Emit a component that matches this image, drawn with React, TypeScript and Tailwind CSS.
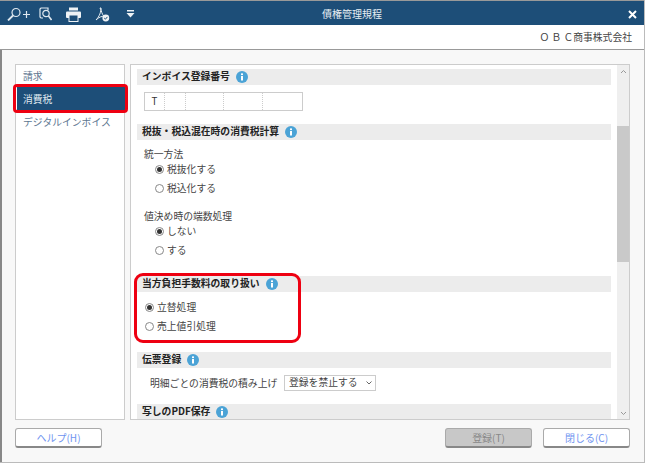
const jp = { fontFamily: '"Noto Sans CJK JP", "Liberation Sans", sans-serif' };

function Info({ className = "" }: { className?: string }) {
  return (
    <svg width="12" height="12" viewBox="0 0 12 12" className={className}>
      <circle cx="6" cy="6" r="6" fill="#4ba3d6" />
      <rect x="5" y="5" width="2" height="4.5" fill="#fff" />
      <rect x="5" y="2.4" width="2" height="1.7" fill="#fff" />
    </svg>
  );
}

function Bar({ title }: { title: string }) {
  return (
    <div className="h-4 shrink-0 bg-[#ececec] flex items-center pl-[5px] w-[474px]">
      <span className="text-[9.8px] font-bold text-[#222] leading-none">{title}</span>
      <Info className="ml-[6px]" />
    </div>
  );
}

function Radio({ label, on }: { label: string; on?: boolean }) {
  return (
    <div className="flex items-center h-[19px] gap-[3px]">
      <span className="w-[9px] h-[9px] rounded-full border border-[#888] bg-white flex items-center justify-center">
        {on && <span className="w-[5px] h-[5px] rounded-full bg-[#333]" />}
      </span>
      <span className="text-[9.8px] text-[#444] leading-none">{label}</span>
    </div>
  );
}

function Btn({ label, disabled, className = "" }: { label: string; disabled?: boolean; className?: string }) {
  return (
    <div
      className={`w-[87px] h-5 rounded-[3px] border border-[#aaa] border-b-2 border-b-[#888] flex items-center justify-center text-[10px] ${
        disabled ? "bg-[#c8c8c8] text-[#888]" : "bg-white text-[#6f94f0]"
      } ${className}`}
    >
      {label}
    </div>
  );
}

export default function App() {
  return (
    <div style={jp} className="relative w-[645px] h-[463px] flex flex-col bg-[#f8f8f8] overflow-hidden">
      {/* title bar */}
      <div className="h-[25px] shrink-0 bg-[#1d4e78] border-t border-t-[#999] flex items-center pt-[2px] pl-[7px] pr-[8px] text-white relative">
        <svg width="24" height="14" viewBox="0 0 24 14" fill="none" stroke="#dfe8ef" strokeWidth="1.2">
          <circle cx="9" cy="5.5" r="4" />
          <path d="M6 8.5 L1 13.5" strokeWidth="1.8" />
          <path d="M16 7.5 H23 M19.5 4 V11" />
        </svg>
        <svg width="13" height="14" viewBox="0 0 13 14" fill="none" stroke="#dfe8ef" strokeWidth="1.2" className="ml-[8px]">
          <path d="M5 1 H2 L1 2 V10 L2 11 H4" />
          <circle cx="7" cy="6.5" r="3.2" />
          <path d="M9.5 9 L12.5 13" strokeWidth="1.6" />
          <path d="M5 1 H9 V3" />
        </svg>
        <svg width="15" height="15" viewBox="0 0 15 15" className="ml-[14px]">
          <rect x="3" y="0.5" width="9" height="3" fill="#eef2f5" />
          <rect x="0" y="4.5" width="15" height="6.5" rx="1" fill="#eef2f5" />
          <rect x="3" y="8" width="9" height="6.5" fill="#1d4e78" stroke="#eef2f5" />
        </svg>
        <svg width="15" height="15" viewBox="0 0 15 15" fill="none" className="ml-[14px]">
          <path d="M5 1 C7 4 4 10 1 13 C4 10 7 9 9 9.5 C7 7 6 4 6 1 Z" stroke="#e6edf2" strokeWidth="1" />
          <circle cx="10.8" cy="11" r="3.4" fill="#eef2f5" />
          <path d="M9.2 11 L10.4 12.2 L12.4 9.9" stroke="#1d4e78" strokeWidth="1" />
        </svg>
        <svg width="9" height="8" viewBox="0 0 9 8" className="ml-[16px]">
          <rect x="1" y="0" width="7" height="1.5" fill="#eef2f5" />
          <path d="M0.5 3 H8.5 L4.5 7.5 Z" fill="#eef2f5" />
        </svg>
        <span className="flex-1 text-center text-[10px] text-[#e8eef3] pr-[59px] leading-none">債権管理規程</span>
        <svg width="9" height="9" viewBox="0 0 9 9" stroke="#fff" strokeWidth="2">
          <path d="M1 1 L8 8 M8 1 L1 8" />
        </svg>
      </div>

      {/* company */}
      <div className="h-[25px] shrink-0 bg-white border-b border-b-[#999] flex items-center justify-end pt-[1px] pr-[13px] text-[9.8px] text-[#444] leading-none">
        <span>Ｏ Ｂ Ｃ商事株式会社</span>
      </div>

      {/* body */}
      <div className="flex-1 flex flex-col border-l-2 border-l-[#888] border-b border-b-[#bbb] pl-[13px] pr-[15px] pt-[14px] min-h-0">
        <div className="flex gap-[5px] h-[356px] shrink-0">
          <div className="w-[110px] border border-[#ccc] bg-white px-px flex flex-col text-[9.8px]">
            <div className="h-[22px] flex items-center pl-[6px] text-[#5d7690]">請求</div>
            <div className="h-[24px] -mr-[2px] flex items-center pl-[6px] bg-[#1d4e78] text-[#dfe8ef]">消費税</div>
            <div className="h-[22px] flex items-center pl-[6px] text-[#5d7690]">デジタルインボイス</div>
          </div>

          <div className="w-[500px] border border-[#ccc] bg-white flex relative overflow-hidden">
            <div className="flex-1 pl-[6px] pt-[4px] flex flex-col min-w-0">
              <Bar title="インボイス登録番号" />
              <div className="flex shrink-0 ml-[7px] mt-[7px] h-[19px] w-[159px] border border-[#ccc] text-[9.8px] text-[#333]">
                <div className="w-[20px] flex items-center justify-center border-r border-dotted border-r-[#ccc]">T</div>
                <div className="w-[21px] border-r border-dotted border-r-[#ccc]" />
                <div className="w-[38px] border-r border-dotted border-r-[#ccc]" />
                <div className="w-[39px] border-r border-dotted border-r-[#ccc]" />
                <div className="flex-1" />
              </div>
              <div className="mt-[13px]"><Bar title="税抜・税込混在時の消費税計算" /></div>
              <div className="pl-[7px] pt-[7px] text-[9.8px] text-[#444]">
                <div className="h-[15px] flex items-center">統一方法</div>
                <div className="pl-[11px] -mt-[2px]">
                  <Radio label="税抜化する" on />
                  <Radio label="税込化する" />
                </div>
                <div className="h-[15px] flex items-center mt-[11px]">値決め時の端数処理</div>
                <div className="pl-[11px] -mt-[2px]">
                  <Radio label="しない" on />
                  <Radio label="する" />
                </div>
              </div>
              <div className="mt-[16px]"><Bar title="当方負担手数料の取り扱い" /></div>
              <div className="pl-[8px] pt-[6px]">
                <Radio label="立替処理" on />
                <Radio label="売上値引処理" />
              </div>
              <div className="mt-[16px]"><Bar title="伝票登録" /></div>
              <div className="flex shrink-0 items-center mt-[7px] pl-[13px] text-[9.8px] text-[#444]">
                <span className="w-[134px]">明細ごとの消費税の積み上げ</span>
                <div className="w-[92px] h-[16px] border border-[#ccc] bg-white flex items-center pl-[4px] pr-[3px] justify-between">
                  <span className="leading-none">登録を禁止する</span>
                  <svg width="6" height="4" viewBox="0 0 6 4" fill="none" stroke="#666"><path d="M0.5 0.5 L3 3 L5.5 0.5" /></svg>
                </div>
              </div>
              <div className="mt-[13px]"><Bar title="写しのPDF保存" /></div>
            </div>

            {/* scrollbar */}
            <div className="w-[12px] shrink-0 bg-[#efefef] flex flex-col items-center relative">
              <svg width="7" height="5" viewBox="0 0 7 5" fill="none" stroke="#999" className="mt-[4px] shrink-0"><path d="M1 4 L3.5 1.5 L6 4" /></svg>
              <div className="w-full h-[136px] bg-[#c9c9c9] mt-[52px] shrink-0" />
              <div className="flex-1" />
              <svg width="7" height="5" viewBox="0 0 7 5" fill="none" stroke="#999" className="mb-[3px] shrink-0"><path d="M1 1 L3.5 3.5 L6 1" /></svg>
            </div>
          </div>
        </div>

        {/* footer */}
        <div className="flex mt-[8px] items-start">
          <Btn label="ヘルプ(H)" />
          <div className="flex-1" />
          <Btn label="登録(T)" disabled className="mr-[11px]" />
          <Btn label="閉じる(C)" />
        </div>
      </div>

      {/* red highlights */}
      <div className="absolute left-[13px] top-[84px] w-[115px] h-[29px] border-[3px] border-[#ee0011] rounded-[4px]" />
      <div className="absolute left-[134px] top-[273px] w-[167px] h-[70px] border-[3px] border-[#ee0011] rounded-[9px]" />
      <div className="absolute left-0 top-0 w-full h-full border-r border-b border-[#bbb] pointer-events-none" />
    </div>
  );
}
